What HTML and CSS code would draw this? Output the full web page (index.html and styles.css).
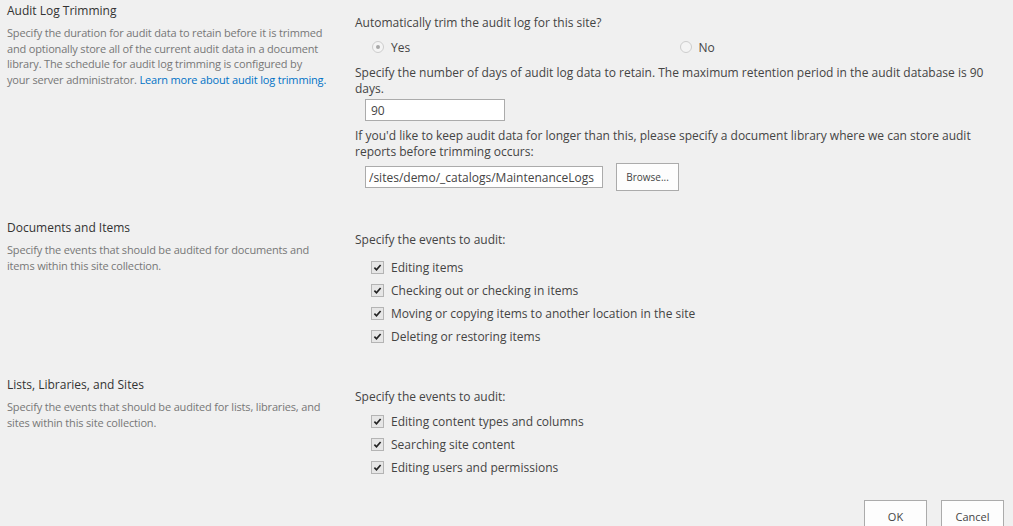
FILE: index.html
```html
<!DOCTYPE html>
<html lang="en">
<head>
    <meta charset="UTF-8">
    <title>Site Collection Audit Settings</title>
    <link rel="stylesheet" href="styles.css">
</head>
<body>
    <div class="settings">
        <div class="section">
            <div class="section-info">
                <h3>Audit Log Trimming</h3>
                <p>Specify the duration for audit data to retain before it is trimmed and optionally store all of the current audit data in a document library. The schedule for audit log trimming is configured by your server administrator. <a href="#">Learn more about audit log trimming.</a></p>
            </div>
            <div class="section-body">
                <div class="text">Automatically trim the audit log for this site?</div>
                <div class="radio-row">
                    <label class="radio-item"><span class="radio checked"></span>Yes</label>
                    <label class="radio-item"><span class="radio"></span>No</label>
                </div>
                <div class="text spaced">Specify the number of days of audit log data to retain. The maximum retention period in the audit database is 90 days.</div>
                <input class="days-input" type="text" value="90">
                <div class="text spaced-small">If you'd like to keep audit data for longer than this, please specify a document library where we can store audit reports before trimming occurs:</div>
                <div class="browse-row">
                    <input class="path-input" type="text" value="/sites/demo/_catalogs/MaintenanceLogs">
                    <button class="browse-button">Browse...</button>
                </div>
            </div>
        </div>

        <div class="section documents">
            <div class="section-info">
                <h3>Documents and Items</h3>
                <p>Specify the events that should be audited for documents and items within this site collection.</p>
            </div>
            <div class="section-body">
                <div class="text">Specify the events to audit:</div>
                <ul class="checks">
                    <li><span class="check"><svg viewBox="0 0 12 12"><path d="M2.6 6.2 L4.9 8.6 L9.4 3.2" /></svg></span>Editing items</li>
                    <li><span class="check"><svg viewBox="0 0 12 12"><path d="M2.6 6.2 L4.9 8.6 L9.4 3.2" /></svg></span>Checking out or checking in items</li>
                    <li><span class="check"><svg viewBox="0 0 12 12"><path d="M2.6 6.2 L4.9 8.6 L9.4 3.2" /></svg></span>Moving or copying items to another location in the site</li>
                    <li><span class="check"><svg viewBox="0 0 12 12"><path d="M2.6 6.2 L4.9 8.6 L9.4 3.2" /></svg></span>Deleting or restoring items</li>
                </ul>
            </div>
        </div>

        <div class="section lists">
            <div class="section-info">
                <h3>Lists, Libraries, and Sites</h3>
                <p>Specify the events that should be audited for lists, libraries, and sites within this site collection.</p>
            </div>
            <div class="section-body">
                <div class="text">Specify the events to audit:</div>
                <ul class="checks">
                    <li><span class="check"><svg viewBox="0 0 12 12"><path d="M2.6 6.2 L4.9 8.6 L9.4 3.2" /></svg></span>Editing content types and columns</li>
                    <li><span class="check"><svg viewBox="0 0 12 12"><path d="M2.6 6.2 L4.9 8.6 L9.4 3.2" /></svg></span>Searching site content</li>
                    <li><span class="check"><svg viewBox="0 0 12 12"><path d="M2.6 6.2 L4.9 8.6 L9.4 3.2" /></svg></span>Editing users and permissions</li>
                </ul>
            </div>
        </div>

        <div class="buttons">
            <button class="action-button">OK</button>
            <button class="action-button">Cancel</button>
        </div>
    </div>
</body>
</html>
```

FILE: styles.css
```css
html, body {
    overflow: hidden;
}
body {
    margin: 0;
    padding: 0;
    background-color: #f0f0f0;
    font-family: 'Open Sans', 'Noto Sans', sans-serif;
    color: #444;
    font-size: 12px;
}
.settings {
    width: 1013px;
}
.section {
    display: flex;
}
.section-info {
    flex-shrink: 0;
    width: 355px;
    padding: 2px 0 0 7px;
    box-sizing: border-box;
}
.section-info h3 {
    margin: 0;
    font-size: 12px;
    font-weight: normal;
    line-height: 18px;
    color: #333;
}
.section-info p {
    width: 320px;
    margin: 5px 0 0 0;
    font-size: 11px;
    line-height: 15.7px;
    letter-spacing: -0.17px;
    color: #777;
}
.section-info a {
    color: #0072c6;
    text-decoration: none;
}
.section-body {
    width: 630px;
    padding-top: 15px;
}
.text {
    line-height: 16px;
    color: #444;
}
.spaced {
    margin-top: 10px;
}
.spaced-small {
    margin-top: 7px;
}
.radio-row {
    display: flex;
    margin-top: 8px;
    height: 16px;
    align-items: center;
}
.radio-item {
    display: flex;
    align-items: center;
    width: 308px;
    margin-left: 17px;
}
.radio-item + .radio-item {
    margin-left: 0;
    padding-left: 2px;
}
.radio {
    width: 10px;
    height: 10px;
    border: 1px solid #cdcdcd;
    border-radius: 50%;
    background-color: #f4f4f4;
    margin-right: 7px;
    position: relative;
}
.radio.checked::after {
    content: '';
    position: absolute;
    left: 3px;
    top: 3px;
    width: 4px;
    height: 4px;
    border-radius: 50%;
    background-color: #a8a8a8;
}
input[type="text"] {
    font-family: inherit;
    font-size: 12px;
    color: #444;
    background-color: #fff;
    border: 1px solid #ababab;
    outline: none;
    box-sizing: border-box;
    height: 22px;
    margin: 0;
}
.days-input {
    display: block;
    margin: 2px 0 0 10px !important;
    width: 140px;
    padding: 0 5px;
}
.browse-row {
    display: flex;
    align-items: center;
    margin-top: 3px;
    margin-left: 10px;
}
.path-input {
    width: 238px;
    padding: 0 3px;
}
.browse-button {
    margin-left: 13px;
    width: 63px;
    height: 28px;
    border: 1px solid #ababab;
    background-color: #fdfdfd;
    font-family: inherit;
    font-size: 10px;
    color: #444;
    padding: 0;
}
.documents {
    margin-top: 26px;
}
.documents .checks {
    margin-top: 7.5px;
}
.lists {
    margin-top: 26.5px;
}
.lists .checks {
    margin-top: 4.5px;
}
.checks {
    list-style: none;
    margin: 0;
    padding: 0 0 0 16px;
}
.checks li {
    display: flex;
    align-items: center;
    height: 23px;
    color: #444;
}
.check {
    width: 11px;
    height: 11px;
    border: 1px solid #b4b4b4;
    background-color: #e6e6e6;
    margin-right: 7px;
    display: flex;
}
.check svg {
    width: 11px;
    height: 11px;
}
.check path {
    fill: none;
    stroke: #222;
    stroke-width: 1.8;
}
.buttons {
    display: flex;
    justify-content: flex-end;
    gap: 14px;
    margin-top: 21.5px;
    padding-right: 9px;
}
.action-button {
    width: 63px;
    height: 34px;
    border: 1px solid #ababab;
    background-color: #fdfdfd;
    font-family: inherit;
    font-size: 11px;
    color: #444;
    padding: 0 0 2px 0;
}
```
